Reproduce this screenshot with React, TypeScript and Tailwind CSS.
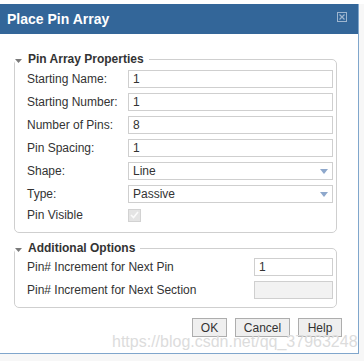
import React from "react";

const fields = [
  { label: "Starting Name:", value: "1" },
  { label: "Starting Number:", value: "1" },
  { label: "Number of Pins:", value: "8" },
  { label: "Pin Spacing:", value: "1" },
];

const selects = [
  { label: "Shape:", value: "Line" },
  { label: "Type:", value: "Passive" },
];

function DropArrow() {
  return (
    <svg width="8" height="5" viewBox="0 0 8 5">
      <path d="M0 0H8L4 5Z" fill="#8ea8cc" />
    </svg>
  );
}

function Legend({ text }: { text: string }) {
  return (
    <legend className="pr-[5px] text-[12px] leading-[14px] font-bold text-[#333]">
      <span className="inline-flex items-center">
        <svg width="7" height="4" viewBox="0 0 7 4" className="mr-[6px] mt-[4px]">
          <path d="M0 0H7L3.5 4Z" fill="#7a7a7a" />
        </svg>
        {text}
      </span>
    </legend>
  );
}

export default function App() {
  return (
    <div className="relative w-[364px] h-[361px] overflow-hidden bg-[#f7f7f7] font-['Liberation_Sans',Arial,sans-serif]">
      <div className="h-[4px] bg-white" />
      {/* dialog */}
      <div className="w-[359px] h-[350px] bg-white border-r border-b border-[#80a6cc] flex flex-col">
        <div className="h-[30px] bg-[#336699] flex items-center justify-between pl-[7px] pr-[11px]">
          <span className="text-white text-[14px] leading-[16px] font-bold">Place Pin Array</span>
          <svg width="10" height="10" viewBox="0 0 10 10" className="mb-[4px]">
            <rect x="0.5" y="0.5" width="9" height="9" fill="none" stroke="#9fb6cf" strokeWidth="1" />
            <path d="M2.5 2.5L7.5 7.5M7.5 2.5L2.5 7.5" stroke="#9fb6cf" strokeWidth="1.2" />
          </svg>
        </div>

        <div className="pl-[14px] pr-[16px] pt-[18px] flex flex-col">
          <fieldset className="m-0 mr-[5px] p-0 min-w-0 border border-[#cfcfcf] rounded-[5px]">
            <Legend text="Pin Array Properties" />
            <div className="pl-[12px] pr-[3px] pt-[4px] pb-[10px] flex flex-col gap-[5px] text-[12px] text-[#333]">
              {fields.map((f) => (
                <div key={f.label} className="flex items-center h-[18px]">
                  <span className="w-[101px]">{f.label}</span>
                  <div className="flex-1 h-[18px] border border-[#cfcfcf] flex items-center pl-[4px] leading-none">
                    {f.value}
                  </div>
                </div>
              ))}
              {selects.map((s) => (
                <div key={s.label} className="flex items-center h-[18px]">
                  <span className="w-[101px]">{s.label}</span>
                  <div className="flex-1 h-[18px] border border-[#cfcfcf] flex items-center justify-between pl-[4px] pr-[4px] leading-none">
                    <span>{s.value}</span>
                    <DropArrow />
                  </div>
                </div>
              ))}
              <div className="flex items-center h-[14px]">
                <span className="w-[101px]">Pin Visible</span>
                <div className="w-[13px] h-[13px] bg-[#e4e4e4] border border-[#d2d2d2] flex items-center justify-center">
                  <svg width="9" height="8" viewBox="0 0 9 8">
                    <path d="M1 4L3.5 6.5L8 1" fill="none" stroke="#fbfbfb" strokeWidth="1.6" />
                  </svg>
                </div>
              </div>
            </div>
          </fieldset>

          <fieldset className="m-0 mt-[8px] mr-[5px] p-0 min-w-0 border border-[#cfcfcf] rounded-[5px]">
            <Legend text="Additional Options" />
            <div className="pl-[12px] pr-[3px] pt-[3px] pb-[8px] flex flex-col gap-[5px] text-[12px] text-[#333]">
              <div className="flex items-center justify-between h-[18px]">
                <span>Pin# Increment for Next Pin</span>
                <div className="w-[79px] h-[18px] border border-[#cfcfcf] flex items-center pl-[4px] leading-none">1</div>
              </div>
              <div className="flex items-center justify-between h-[18px]">
                <span>Pin# Increment for Next Section</span>
                <div className="w-[79px] h-[18px] border border-[#cfcfcf] bg-[#f2f2f2]" />
              </div>
            </div>
          </fieldset>

          <div className="mt-[10px] flex justify-end gap-[8px] text-[12px] text-[#333]">
            <button className="w-[35px] h-[19px] border border-[#adadad] bg-[#efefef] leading-none">OK</button>
            <button className="w-[55px] h-[19px] border border-[#adadad] bg-[#efefef] leading-none">Cancel</button>
            <button className="w-[44px] h-[19px] border border-[#adadad] bg-[#efefef] leading-none">Help</button>
          </div>
        </div>
      </div>

      {/* watermark */}
      <div className="absolute left-[112px] top-[334px] text-[16px] leading-[16px] text-[#dcdcdc] whitespace-nowrap pointer-events-none">
        https://blog.csdn.net/qq_37963248
      </div>
    </div>
  );
}
